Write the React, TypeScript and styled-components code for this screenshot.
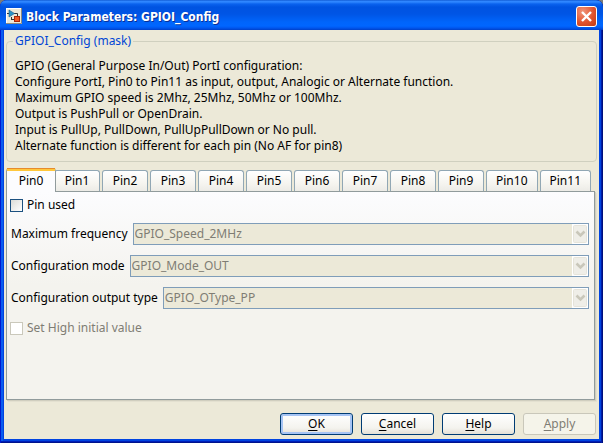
import React, { useState } from "react";
import styled, { createGlobalStyle, css } from "styled-components";

const GlobalStyle = createGlobalStyle`
  * { box-sizing: border-box; }
  body { margin: 0; background: #7b7b78; }
  body, button, select, input {
    font-family: "Noto Sans", "DejaVu Sans", sans-serif;
    font-size: 12px;
    line-height: 16px;
    color: #000;
  }
`;

const Window = styled.main`
  display: flex;
  flex-direction: column;
  min-height: 100vh;
  padding: 0 4px 4px;
  border-radius: 7px 7px 0 0;
  background: #0044e0;
  box-shadow: inset 1px 0 #0019cf, inset -1px 0 #00107c, inset -2px 0 #001ca8,
    inset 0 -1px #00138c, inset 0 -2px #001db8, inset 3px 0 #0a5cf0;
`;

const TitleBar = styled.header`
  display: flex;
  align-items: center;
  gap: 4px;
  height: 30px;
  margin: 0 -4px;
  padding: 2px 6px 0;
  border-radius: 7px 7px 0 0;
  background: linear-gradient(#0a50c8 0, #2f86ff 1px, #2f86ff 2px, #0a62ee 4px, #0053e1 7px,
    #0055e5 14px, #0065fb 22px, #0066ff 26px, #0056ee 28px, #0040c8 30px);
`;

const Title = styled.h1`
  flex: 1;
  margin: 0;
  padding-top: 2px;
  font-family: "DejaVu Sans Condensed", "DejaVu Sans", sans-serif;
  font-size: 12px;
  font-weight: bold;
  font-stretch: condensed;
  line-height: 18px;
  color: #fff;
  text-shadow: 1px 1px #0a2f96;
`;

const CloseButton = styled.button`
  display: flex;
  width: 21px;
  height: 21px;
  padding: 0;
  border: 1px solid #fff;
  border-radius: 3px;
  background: radial-gradient(circle at 30% 25%, #f0957a, #e2532e 55%, #c03a12);
`;

const Content = styled.div`
  flex: 1;
  display: flex;
  flex-direction: column;
  padding: 3px 3px 4px 2px;
  background: #ece9d8;
`;

const Group = styled.fieldset`
  min-width: 0;
  margin: 0 -1px 0 0;
  padding: 9px 8px 7px;
  border: 1px solid #d0d0bf;
  border-radius: 4px;
`;

const GroupTitle = styled.legend`
  padding: 0 2px;
  margin-left: -2px;
  color: #0046d5;
`;

const Description = styled.p`
  margin: 0;
`;

const Tabs = styled.div`
  display: flex;
  align-items: flex-end;
  margin-top: 6px;
  height: 23px;
`;

const Tab = styled.button<{ $active: boolean }>`
  height: 21px;
  padding: 0 9px;
  margin-right: 2px;
  flex: none;
  min-width: 46px;
  border: 1px solid #91a7b4;
  border-bottom: 0;
  border-radius: 3px 3px 0 0;
  background: linear-gradient(#fff, #f6f5f0 60%, #ecebe6);
  white-space: nowrap;
  ${(p) =>
    p.$active &&
    css`
      position: relative;
      height: 24px;
      min-width: 50px;
      margin: 0 -2px -1px 0;
      padding-bottom: 2px;
      border-color: #919b9c;
      border-top: 3px solid #ffc73c;
      background: #fcfcfe;
      &::before {
        content: "";
        position: absolute;
        inset: -3px 0 auto;
        height: 1px;
        background: #e68b2c;
      }
    `}
`;

const Panel = styled.section`
  flex: 1;
  display: flex;
  flex-direction: column;
  margin-right: 1px;
  padding: 5px 5px 8px 3px;
  border: 1px solid #919b9c;
  background: linear-gradient(#fcfcfe, #f4f3ee 45%);
  box-shadow: 1px 1px #d0cebf, 2px 2px #e3e0d0;
`;

const CheckRow = styled.label<{ $disabled?: boolean }>`
  display: flex;
  align-items: center;
  align-self: flex-start;
  gap: 4px;
  height: 16px;
  color: ${(p) => (p.$disabled ? "#7f7d74" : "#000")};
`;

const CheckBox = styled.input`
  appearance: none;
  width: 13px;
  height: 13px;
  margin: 0;
  border: 1px solid #1c5180;
  background: linear-gradient(135deg, #dcdcd7, #fff);
  &:checked { background: #21a121; }
  &:disabled { border-color: #cac8bb; background: #fff; }
`;

const Fields = styled.div`
  display: grid;
  gap: 10px;
  margin: 10px 0 11px;
`;

const FieldRow = styled.div`
  display: flex;
  align-items: center;
  gap: 5px;
  padding-left: 1px;
`;

const SelectBox = styled.div`
  position: relative;
  flex: 1;
  display: flex;
`;

const Select = styled.select`
  appearance: none;
  width: 100%;
  height: 22px;
  padding: 0 18px 0 1px;
  border: 1px solid #7f9db9;
  border-radius: 0;
  background: #fff;
  &:disabled { opacity: 1; color: #7f7d74; background: #ece9d8; }
`;

const Arrow = styled.svg`
  position: absolute;
  top: 1px;
  right: 1px;
  pointer-events: none;
`;

const Actions = styled.footer`
  display: flex;
  justify-content: flex-end;
  gap: 8px;
  margin-top: 13px;
`;

const ActionButton = styled.button<{ $primary?: boolean }>`
  width: 73px;
  height: 22px;
  padding: 0;
  border: 1px solid #003c74;
  border-radius: 3px;
  background: linear-gradient(#fff, #f4f3ee 70%, #e4e0d6);
  ${(p) => p.$primary && css`box-shadow: inset 0 0 0 2px #a6c4f4;`}
  &:disabled { border-color: #c9c7ba; background: #f5f4ea; color: #7f7d74; }
`;

const Mnemonic = styled.span`
  text-decoration: underline;
  text-underline-offset: 2px;
`;

const pins = Array.from({ length: 12 }, (_, i) => `Pin${i}`);

const fields = [
  { id: "speed", label: "Maximum frequency", value: "GPIO_Speed_2MHz" },
  { id: "mode", label: "Configuration mode", value: "GPIO_Mode_OUT" },
  { id: "otype", label: "Configuration output type", value: "GPIO_OType_PP" },
];

const description = [
  "GPIO (General Purpose In/Out) PortI configuration:",
  "Configure PortI, Pin0 to Pin11 as input, output, Analogic or Alternate function.",
  "Maximum GPIO speed is 2Mhz, 25Mhz, 50Mhz or 100Mhz.",
  "Output is PushPull or OpenDrain.",
  "Input is PullUp, PullDown, PullUpPullDown or No pull.",
  "Alternate function is different for each pin (No AF for pin8)",
];

const actions = [
  { label: "OK", primary: true },
  { label: "Cancel" },
  { label: "Help" },
  { label: "Apply", disabled: true },
];

function BlockIcon() {
  return (
    <svg width="16" height="16" viewBox="0 0 16 16" aria-hidden="true">
      <rect width="16" height="16" fill="#ece9d8" />
      <path d="M0 15.500H15.500V0" fill="none" stroke="#8c8a80" />
      <path d="M0 .5H15M.5 0V15" fill="none" stroke="#fff" />
      <path d="M1 5.500H3M8 5.500H11.500V9M5.500 11.500H8M5.500 9V12" fill="none" stroke="#333" />
      <path d="M3 2V9L8.500 5.500Z" fill="#2a94c4" stroke="#1d5c90" strokeWidth=".6" />
      <rect x="8.500" y="8.500" width="5" height="5" fill="#ee5a24" stroke="#a82808" />
    </svg>
  );
}

function DropArrow() {
  return (
    <Arrow width="16" height="20" viewBox="0 0 16 20" aria-hidden="true">
      <rect width="16" height="20" fill="#fff" />
      <rect x="1.500" y="1.500" width="13" height="17" rx="1" fill="#efeee8" stroke="#e6e4da" />
      <path d="M4.500 7.500L8.500 11.500L12.500 7.500" fill="none" stroke="#c9c7ba" strokeWidth="2.600" />
    </Arrow>
  );
}

export default function App() {
  const [active, setActive] = useState(0);
  const [used, setUsed] = useState(false);
  return (
    <>
      <GlobalStyle />
      <Window>
        <TitleBar>
          <BlockIcon />
          <Title>Block Parameters: GPIOI_Config</Title>
          <CloseButton aria-label="Close">
            <svg width="19" height="19" viewBox="0 0 19 19" aria-hidden="true">
              <path d="M5 5L14 14M14 5L5 14" stroke="#fff" strokeWidth="2.400" />
            </svg>
          </CloseButton>
        </TitleBar>
        <Content>
          <Group>
            <GroupTitle>GPIOI_Config (mask)</GroupTitle>
            {description.map((line) => (
              <Description key={line}>{line}</Description>
            ))}
          </Group>
          <Tabs role="tablist">
            {pins.map((pin, i) => (
              <Tab
                key={pin}
                role="tab"
                aria-selected={i === active}
                $active={i === active}
                onClick={() => setActive(i)}
              >
                {pin}
              </Tab>
            ))}
          </Tabs>
          <Panel role="tabpanel" aria-label={pins[active]}>
            <CheckRow>
              <CheckBox type="checkbox" checked={used} onChange={(e) => setUsed(e.target.checked)} />
              Pin used
            </CheckRow>
            <Fields>
              {fields.map((f) => (
                <FieldRow key={f.id}>
                  <label htmlFor={f.id}>{f.label}</label>
                  <SelectBox>
                    <Select id={f.id} disabled={!used}>
                      <option>{f.value}</option>
                    </Select>
                    <DropArrow />
                  </SelectBox>
                </FieldRow>
              ))}
            </Fields>
            <CheckRow $disabled={!used}>
              <CheckBox type="checkbox" disabled={!used} />
              Set High initial value
            </CheckRow>
          </Panel>
          <Actions>
            {actions.map((a) => (
              <ActionButton key={a.label} $primary={a.primary} disabled={a.disabled}>
                <Mnemonic>{a.label[0]}</Mnemonic>
                {a.label.slice(1)}
              </ActionButton>
            ))}
          </Actions>
        </Content>
      </Window>
    </>
  );
}
